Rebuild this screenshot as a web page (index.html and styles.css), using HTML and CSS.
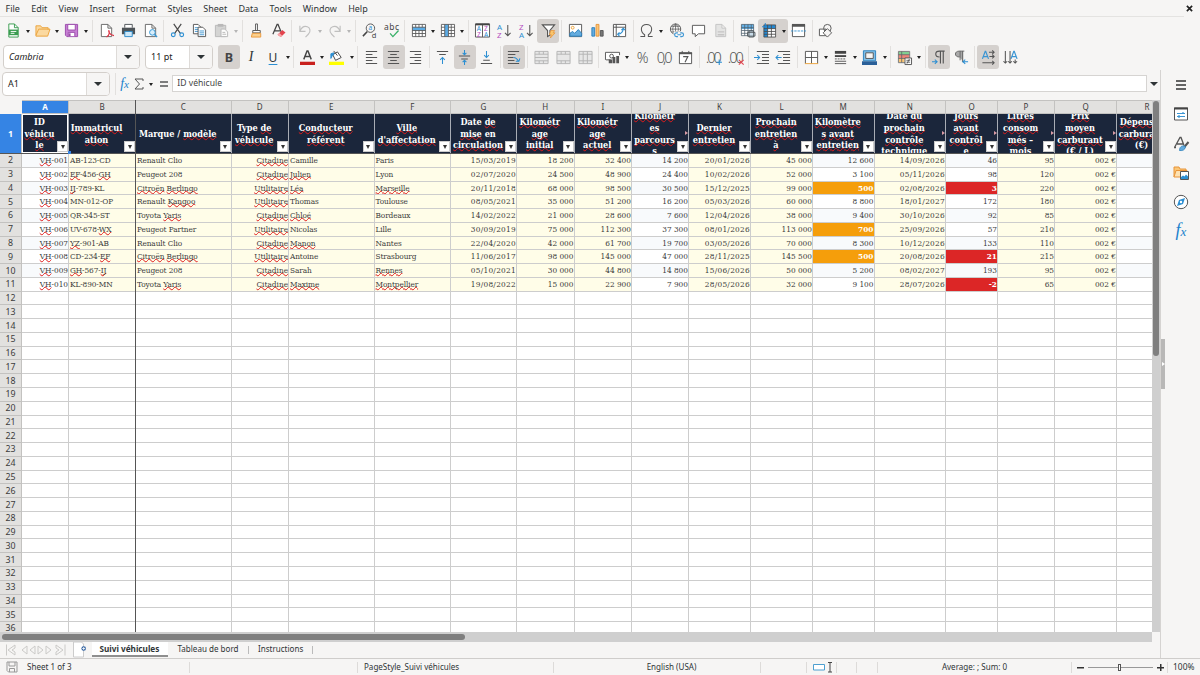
FILE: index.html
```
<!DOCTYPE html>
<html lang="fr">
<head>
<meta charset="UTF-8">
<meta name="viewport" content="width=device-width, initial-scale=1.0">
<title>Suivi véhicules</title>
<link rel="stylesheet" href="styles.css">
</head>
<body>
<div class="app">

  <nav class="menubar">
    <span>File</span><span>Edit</span><span>View</span><span>Insert</span><span>Format</span><span>Styles</span><span>Sheet</span><span>Data</span><span>Tools</span><span>Window</span><span>Help</span>
    <button class="close"><svg viewBox="0 0 8 8" width="7" height="7"><path d="M1 1l6 6M7 1L1 7" stroke="#222" stroke-width="1.9"/></svg></button>
  </nav>

  <div class="toolbar toolbar-main">
    <button class="btn"><svg viewBox="0 0 16 16"><path d="M3 1h6l4 4v10H3z" fill="#fff" stroke="#3a9c50"/><path d="M9 1v4h4" stroke="#3a9c50"/><path d="M3 7h10v6H3z" fill="#3a9c50"/><path d="M5 9h6M5 11h4" stroke="#fff"/></svg></button><i class="drop"></i>
    <button class="btn"><svg viewBox="0 0 16 16"><path d="M1 13V3h5l1.500 2H14v2M1 13L4 6.500h12L13.500 14H1z" fill="#fbd9a0" stroke="#eba33c"/></svg></button><i class="drop"></i>
    <button class="btn"><svg viewBox="0 0 16 16"><path d="M1.500 1.500h13v13H3l-1.500-1.500z" fill="#c77fd4" stroke="#9b4bab"/><path d="M4 1.500h8v6H4z" fill="#fff" stroke="#9b4bab"/><path d="M4.500 14v-4h7v4" fill="#fff" stroke="#9b4bab"/><path d="M6 11v3" stroke="#9b4bab" stroke-width="2"/></svg></button><i class="drop"></i>
    <i class="sep"></i>
    <button class="btn"><svg viewBox="0 0 16 16"><path d="M2.500 1.500h7l4 4v9h-11zM9.500 1.500v4h4" fill="#fff" stroke="#666"/><path d="M8 15c4-2 3-7 2.500-7s0 5 5.500 5.500" stroke="#dc3545" stroke-width="1.200"/></svg></button>
    <button class="btn"><svg viewBox="0 0 16 16"><path d="M4 5V1.500h8V5" fill="#fff" stroke="#4d5357"/><path d="M1 5h14v7H1z" fill="#4d5357"/><path d="M4 9h8v5.500H4z" fill="#cde7f8" stroke="#2d8bc9"/></svg></button>
    <button class="btn"><svg viewBox="0 0 16 16"><path d="M2.500 1.500h7l4 4v9h-11zM9.500 1.500v4h4" fill="#fff" stroke="#666"/><circle cx="10" cy="10" r="3" fill="#d9eefb" stroke="#3295d4"/><path d="M12.200 12.300L15 15" stroke="#3295d4" stroke-width="1.500"/></svg></button>
    <i class="sep"></i>
    <button class="btn"><svg viewBox="0 0 16 16"><path d="M4 1l7 10M12 1L5 11" stroke="#4b4b4b" stroke-width="1.300"/><circle cx="3.500" cy="12.500" r="2" stroke="#2d8fd2" stroke-width="1.200"/><circle cx="12.500" cy="12.500" r="2" stroke="#2d8fd2" stroke-width="1.200"/></svg></button>
    <button class="btn"><svg viewBox="0 0 16 16"><path d="M1.500 1.500h5l3 3v7h-8z" fill="#fff" stroke="#555"/><path d="M3 5h4M3 7h4M3 9h4" stroke="#4598d0"/><path d="M6.500 4.500h5l3 3v7h-8z" fill="#fff" stroke="#555"/><path d="M8 8.500h5M8 10.500h5M8 12.500h5" stroke="#4598d0"/></svg></button>
    <button class="btn dim"><svg viewBox="0 0 16 16"><path d="M1.500 2.500h11v12h-11z" fill="#ccc" stroke="#aaa"/><path d="M4 1h6v3H4z" fill="#aaa"/><path d="M7.500 6.500h4l3 3v5h-7z" fill="#fff" stroke="#aaa"/><path d="M9 10h3M9 12h4" stroke="#aaa"/></svg></button><i class="drop dim"></i>
    <i class="sep"></i>
    <button class="btn"><svg viewBox="0 0 16 16"><path d="M7 1h2v7H7z" fill="#fff" stroke="#555"/><path d="M4 8h8v2.500H4z" fill="#fff" stroke="#555"/><path d="M3.500 11h9v4h-10z" fill="#fbd08e" stroke="#e9973a"/></svg></button>
    <button class="btn"><svg viewBox="0 0 16 16"><path d="M2 12L6.500 1.500h1L11 10M3.500 8.500h6" stroke="#444" stroke-width="1.300"/><path d="M7 12.500l5-5 3.500 2.500-5 5z" fill="#e3444e"/><path d="M7 12.500l1.800-1.800 3 2.500-1.500 1.800z" fill="#f8a6aa"/></svg></button>
    <i class="sep"></i>
    <button class="btn dim"><svg viewBox="0 0 16 16"><path d="M2 3v6h6M2 9c2-5 5-6 8-5s4 5 1 8l-3 3" stroke="#b3b3b3" stroke-width="1.200"/></svg></button><i class="drop dim"></i>
    <button class="btn dim"><svg viewBox="0 0 16 16"><path d="M14 3v6H8M14 9c-2-5-5-6-8-5S2 9 5 12l3 3" stroke="#b3b3b3" stroke-width="1.200"/></svg></button><i class="drop dim"></i>
    <i class="sep"></i>
    <button class="btn"><svg viewBox="0 0 16 16"><circle cx="9" cy="5.500" r="4.500" stroke="#555"/><path d="M5.700 9L1 14" stroke="#444" stroke-width="1.600"/><text x="6.800" y="7.800" class="t-blue" font-size="7">a</text><text x="10.300" y="15.500" class="t-dark" font-size="8">d</text></svg></button>
    <button class="btn"><svg viewBox="0 0 16 16"><text x="0" y="7.500" class="t-dark" font-size="9" textLength="16">abc</text><path d="M6.500 11l3 3.500L15.500 8" stroke="#39b068" stroke-width="1.400"/></svg></button>
    <i class="sep"></i>
    <button class="btn"><svg viewBox="0 0 16 16"><path d="M1.500 1.500h14v13h-14z" fill="#fff"/><path d="M1.500 4.500h14V8h-14z" fill="#5cabe4"/><path d="M1.500 1.500h14v13h-14zM1.500 4.500h14M1.500 8h14M1.500 11.200h14M5 1.500v3M8.500 1.500v3M12 1.500v3M5 8v6.500M8.500 8v6.500M12 8v6.500" stroke="#555" stroke-width=".9"/></svg></button><i class="drop"></i>
    <button class="btn"><svg viewBox="0 0 16 16"><path d="M1.500 1.500h14v13h-14z" fill="#fff"/><path d="M5 1.500h4v13H5z" fill="#5cabe4"/><path d="M1.500 1.500h14v13h-14zM1.500 4.500H5M9 4.500h6.500M1.500 8H5M9 8h6.500M1.500 11.200H5M9 11.200h6.500M5 1.500v13M9 1.500v13M12 1.500v13" stroke="#555" stroke-width=".9"/></svg></button><i class="drop"></i>
    <i class="sep"></i>
    <button class="btn"><svg viewBox="0 0 16 16"><path d="M.5 1h15v14H.5zM8 1v14" fill="#fff" stroke="#555"/><path d="M.5 1.500h15" stroke="#444" stroke-width="2"/><text x="1.800" y="8.500" class="t-blue" font-size="7">A</text><text x="2" y="14.500" class="t-purple" font-size="7">Z</text><text x="9.700" y="8.500" class="t-purple" font-size="7">Z</text><text x="9.500" y="14.500" class="t-blue" font-size="7">A</text></svg></button>
    <button class="btn"><svg viewBox="0 0 16 16"><text x="0" y="7" class="t-blue" font-size="8.500">A</text><text x="0" y="15.500" class="t-purple" font-size="8.500">Z</text><path d="M11.500 2v11.500M8.500 10.500l3 3 3-3" stroke="#555" stroke-width="1.100"/></svg></button>
    <button class="btn"><svg viewBox="0 0 16 16"><text x="0" y="7" class="t-purple" font-size="8.500">Z</text><text x="0" y="15.500" class="t-blue" font-size="8.500">A</text><path d="M11.500 2v11.500M8.500 10.500l3 3 3-3" stroke="#555" stroke-width="1.100"/></svg></button>
    <button class="btn on"><svg viewBox="0 0 16 16"><path d="M1.500 2h13l-5 6v5L7 14.500V8z" fill="#fff" stroke="#555" stroke-width="1.200"/><path d="M10.500 8h4l-1.500 2.500H15L10 16l1-3.500H9z" fill="#f9c66d" stroke="#e8943a" stroke-width=".8"/></svg></button>
    <i class="sep"></i>
    <button class="btn"><svg viewBox="0 0 16 16"><path d="M1.500 1.500h13v13h-13z" fill="#fff" stroke="#555"/><circle cx="5" cy="5" r="1.500" stroke="#eba33c"/><path d="M2 14v-3l3-2 2 2 4-4 3.500 4v3z" fill="#64acdf" stroke="#2b80bd"/></svg></button>
    <button class="btn"><svg viewBox="0 0 16 16"><path d="M2 5h3v9H2z" fill="#64acdf" stroke="#2b80bd"/><path d="M6.500 1.500h3V14h-3z" fill="#fbc675" stroke="#e8943a"/><path d="M11 8h3v6h-3z" fill="#777" stroke="#555"/></svg></button>
    <button class="btn"><svg viewBox="0 0 16 16"><path d="M1.500 1.500h13v13h-13zM4.500 1.500v13M1.500 4.500h13" fill="#fff" stroke="#555"/><path d="M12 5.500c0 4-2 6-6 6.500M10 7.500l2-2 2 2M8 10l-2 2 2 2" stroke="#2d8fd2" stroke-width="1.100"/></svg></button>
    <i class="sep"></i>
    <button class="btn"><svg viewBox="0 0 16 16"><path d="M1.500 14.500h4.500v-2C3.500 11 2.500 9 2.500 6.500 2.500 3.500 5 1.500 8 1.500s5.500 2 5.500 5c0 2.500-1 4.500-3.500 6v2h4.500" stroke="#555" stroke-width="1.100"/></svg></button><i class="drop"></i>
    <button class="btn"><svg viewBox="0 0 16 16"><circle cx="7" cy="6.500" r="5.500" fill="#fff" stroke="#555"/><path d="M1.500 6.500h11M7 1v11M2.500 3.500h9M2.500 9.500h9M7 1C3 4 3 9 7 12M7 1c4 3 4 8 0 11" stroke="#555" stroke-width=".8"/><path d="M5 9h11v6.500H5z" fill="#f6f5f4"/><path d="M9.500 10.500H8a2 2 0 000 4h1.500M12 10.500h1.500a2 2 0 010 4H12M9 12.500h4" stroke="#3b95d3" stroke-width="1.200"/></svg></button>
    <button class="btn"><svg viewBox="0 0 16 16"><path d="M1.500 2.500h13v9H8l-3.500 3v-3h-3z" fill="#fff" stroke="#555"/></svg></button>
    <button class="btn dim"><svg viewBox="0 0 16 16"><path d="M3 1.500h6.500l4 4v9H3zM9.500 1.500v4h4" fill="#e0e0e0" stroke="#b9b9b9"/><path d="M5 12.500h7M5 9.500h7" stroke="#b9b9b9" stroke-width="1.500"/></svg></button>
    <i class="sep"></i>
    <button class="btn"><svg viewBox="0 0 16 16"><path d="M1.500 1.500h13v12h-13z" fill="#fff"/><path d="M1.500 1.500h13v5h-13z" fill="#64b0e6"/><path d="M1.500 1.500h13v12h-13zM5 1.500v12M8.500 1.500v12M12 1.500v12M1.500 5h13M1.500 8h13M1.500 11h13" stroke="#4b5c69" stroke-width=".8"/><path d="M8 10h8v4H8zM9.500 8.500h5V15h-5z" fill="#c8dbe8" stroke="#4d5357" stroke-width=".9"/></svg></button>
    <span class="on pair"><button class="btn"><svg viewBox="0 0 16 16"><path d="M2 2h12.500v13H2z" fill="#fff"/><path d="M2 2h12.500v4H6v9H2z" fill="#2388d2"/><path d="M2 2h12.500v13H2zM6 2v13M10 2v13M2 6h12.500M2 9h12.500M2 12h12.500" stroke="#4b4b4b" stroke-width=".9"/><path d="M0 4h5M3.500 0v5" stroke="#2388d2"/></svg></button><i class="drop"></i></span>
    <button class="btn"><svg viewBox="0 0 16 16"><path d="M1.500 2v12.500h13V2" fill="#fff" stroke="#555"/><path d="M1 1h14v3H1z" fill="#555"/><path d="M0 8.500h16" stroke="#3b95d3" stroke-dasharray="2.500 1"/></svg></button>
    <i class="sep"></i>
    <button class="btn"><svg viewBox="0 0 16 16"><path d="M1.500 6.500h7v7h-7z" fill="#fff" stroke="#555"/><circle cx="10" cy="5.500" r="4" stroke="#555"/><path d="M10 6l4.500 4.500L10 15l-4.500-4.500z" fill="#f6f5f4" stroke="#555"/></svg></button>
  </div>

  <div class="toolbar toolbar-format">
    <div class="combo font-name"><span>Cambria</span><b></b></div>
    <div class="combo font-size"><span>11 pt</span><b></b></div>
    <button class="btn on bold">B</button>
    <button class="btn ital">I</button>
    <button class="btn under"><u>U</u></button><i class="drop"></i>
    <i class="sep"></i>
    <button class="btn"><svg viewBox="0 0 16 16"><path d="M4 10L7.500 1h1L12 10M5.200 7h5.600" stroke="#444" stroke-width="1.500"/><path d="M0 12.500h16V16H0z" fill="#c9211e"/></svg></button><i class="drop"></i>
    <button class="btn"><svg viewBox="0 0 16 16"><path d="M4 5l5-3 4 6-6 3z" fill="#fff" stroke="#444"/><path d="M5 1l4 5" stroke="#444"/><path d="M2 9V4l3-1v2L3.500 6z" fill="#2d8fd2" stroke="#2d8fd2"/><path d="M0 12.500h16V16H0z" fill="#ff0"/></svg></button><i class="drop"></i>
    <i class="sep"></i>
    <button class="btn"><svg viewBox="0 0 16 16"><path d="M2 1.500h12M2 4.700h7M2 8h12M2 11.200h7M2 14.500h12" stroke="#555" stroke-width="1.100"/></svg></button>
    <button class="btn on"><svg viewBox="0 0 16 16"><path d="M2 1.500h12M4.500 4.700h7M2 8h12M4.500 11.200h7M2 14.500h12" stroke="#555" stroke-width="1.100"/></svg></button>
    <button class="btn"><svg viewBox="0 0 16 16"><path d="M2 1.500h12M7 4.700h7M2 8h12M7 11.200h7M2 14.500h12" stroke="#555" stroke-width="1.100"/></svg></button>
    <i class="sep"></i>
    <button class="btn"><svg viewBox="0 0 16 16"><path d="M2 1.500h12M4.500 4.700h7" stroke="#555" stroke-width="1.100"/><path d="M8 15V8M5.500 10.500L8 8l2.500 2.500" stroke="#2d8fd2" stroke-width="1.100"/></svg></button>
    <button class="btn on"><svg viewBox="0 0 16 16"><path d="M2 6.500h12M4.500 9.500h7" stroke="#555" stroke-width="1.100"/><path d="M8 0v5M6 3l2 2 2-2M8 16v-5M6 13l2-2 2 2" stroke="#2d8fd2" stroke-width="1.100"/></svg></button>
    <button class="btn"><svg viewBox="0 0 16 16"><path d="M4.500 11h7M2 14.300h12" stroke="#555" stroke-width="1.100"/><path d="M8 1v7M5.500 5.500L8 8l2.500-2.500" stroke="#2d8fd2" stroke-width="1.100"/></svg></button>
    <i class="sep"></i>
    <button class="btn on"><svg viewBox="0 0 16 16"><path d="M2 1.500h12M2 4.700h8M2 8h6M2 11.200h7M2 14.500h12" stroke="#555" stroke-width="1.100"/><path d="M8 8c3 0 4 1 5.500 4.500M10.500 12h3.300l1-3" stroke="#2d8fd2" stroke-width="1.100"/></svg></button>
    <i class="sep"></i>
    <button class="btn"><svg viewBox="0 0 16 16"><path d="M1 1.500h14v13H1zM1 4.500h14M1 11.500h14M5.500 1.500v3M10 1.500v3M5.500 11.500v3M10 11.500v3M1 8h14" fill="#e7e7e7" stroke="#b4b4b4"/></svg></button>
    <button class="btn"><svg viewBox="0 0 16 16"><path d="M1 1.500h14v13H1zM1 4.500h14M1 11.500h14M5.500 1.500v3M10 1.500v3M5.500 11.500v3M10 11.500v3" fill="#e7e7e7" stroke="#b4b4b4"/></svg></button>
    <button class="btn"><svg viewBox="0 0 16 16"><path d="M1 1.500h14v13H1zM1 4.500h14M1 11.500h14M5.500 1.500v13M10 1.500v13" fill="#e7e7e7" stroke="#b4b4b4"/></svg></button>
    <i class="sep"></i>
    <button class="btn"><svg viewBox="0 0 16 16"><path d="M.5 10.500v-8h15v3" fill="#fff" stroke="#555"/><circle cx="7" cy="6.500" r="2" stroke="#555"/><path d="M1 10.500h5" stroke="#555"/><path d="M4 10h3.500v4H4zM8 7.500h3V14H8zM12 6.500h3V14h-3z" fill="#555"/></svg></button><i class="drop"></i>
    <button class="btn num">%</button>
    <button class="btn num">0,0</button>
    <button class="btn"><svg viewBox="0 0 16 16"><path d="M1.500 3h13v11.500h-13z" fill="#fff" stroke="#555"/><path d="M1 3.500h14" stroke="#555" stroke-width="2"/><path d="M4.500 1v3M11.500 1v3" stroke="#555"/><path d="M5.500 7h5l-3 6" stroke="#555" stroke-width="1.200"/></svg></button>
    <i class="sep"></i>
    <button class="btn num">.00<svg class="corner" viewBox="0 0 6 6"><path d="M3 .5v5M.5 3h5" stroke="#2d8fd2"/></svg></button>
    <button class="btn num">.00<svg class="corner" viewBox="0 0 6 6"><path d="M.8.8l4.400 4.400M5.200.8L.8 5.200" stroke="#e3444e"/></svg></button>
    <i class="sep"></i>
    <button class="btn"><svg viewBox="0 0 16 16"><path d="M3 1.500h13M8.500 4.700H16M8.500 8H16M8.500 11.200H16M3 14.500h13" stroke="#555" stroke-width="1.100"/><path d="M0 8h6M3.500 5.500L6 8l-2.500 2.500" stroke="#2d8fd2" stroke-width="1.100"/></svg></button>
    <button class="btn"><svg viewBox="0 0 16 16"><path d="M2 1.500h13M7.500 4.700H15M7.500 8H15M7.500 11.200H15M2 14.500h13" stroke="#555" stroke-width="1.100"/><path d="M6 8H0M2.500 5.500L0 8l2.500 2.500" stroke="#2d8fd2" stroke-width="1.100"/></svg></button>
    <i class="sep"></i>
    <button class="btn"><svg viewBox="0 0 16 16"><path d="M1.500 14.500v-13h13v13M8 1.500v13M1.500 8h13" fill="#fff" stroke="#555"/><path d="M1 14.500h14" stroke="#eba33c"/></svg></button><i class="drop"></i>
    <button class="btn"><svg viewBox="0 0 16 16"><path d="M2 2.500h12" stroke="#444" stroke-width="3"/><path d="M2 6.500h12" stroke="#444" stroke-width="2"/><path d="M2 9.500h12" stroke="#555" stroke-dasharray="2 1"/><path d="M2 12h12M2 14.500h12" stroke="#555"/></svg></button><i class="drop"></i>
    <button class="btn"><svg viewBox="0 0 16 16"><path d="M1.500.8h13v10.700h-13z" fill="#7fbfe9" stroke="#2b80bd"/><path d="M4 3h8v6H4z" fill="#f6f5f4" stroke="#555"/><path d="M0 12h16v4H0z" fill="#2a6099"/></svg></button><i class="drop"></i>
    <i class="sep"></i>
    <button class="btn"><svg viewBox="0 0 16 16"><path d="M1.500 1.500h12v12h-12z" fill="#fff"/><path d="M2 2h11v3H2z" fill="#7fcf90"/><path d="M2 5h11v4H2z" fill="#ee8378"/><path d="M2 9h6v4H2z" fill="#fbc675"/><path d="M1.500 1.500h12v12h-12zM5 1.500v12M1.500 5h12M1.500 9h12" stroke="#666" stroke-width=".9"/><path d="M8.500 8.500h7v7h-7z" fill="#fff" stroke="#555"/><path d="M10 11h4M10 13h4M13.300 9.500L10.700 14.500" stroke="#444" stroke-width=".8"/></svg></button><i class="drop"></i>
    <i class="sep"></i>
    <button class="btn on"><svg viewBox="0 0 16 16"><path d="M8 7.500C5 7.500 4 6 4 4.300S5.500 1.200 8 1.200h5.500M9 1v13.500M12 1v13.500" stroke="#555" stroke-width="1.200"/><path d="M0 12.500h5M3 10.200l2.500 2.300L3 14.800" stroke="#2d8fd2" stroke-width="1.100"/></svg></button>
    <button class="btn"><svg viewBox="0 0 16 16"><path d="M6 7.500C3 7.500 1.500 6 1.500 4.300S3 1.200 5.500 1.200H10V12L7 9z" fill="#aaa"/><path d="M6 7.500C3 7.500 1.500 6 1.500 4.300S3 1.200 5.500 1.200H11M6.500 1v10M9 1v12" stroke="#666"/><path d="M15 12.500h-5M12 10.200l-2.500 2.300 2.500 2.300" stroke="#2d8fd2" stroke-width="1.100"/></svg></button>
    <i class="sep"></i>
    <button class="btn on"><svg viewBox="0 0 16 16"><path d="M1.500 9.500l3-8h.5l3 8M2.500 7h4.500" stroke="#3b95d3" stroke-width="1.300"/><path d="M8.500 2.500H14M9 7h5M1.500 13.500H14M12 .5l2 2-2 2M12 5l2 2-2 2M12 11.500l2 2-2 2" stroke="#555" stroke-width="1.100"/></svg></button>
    <button class="btn"><svg viewBox="0 0 16 16"><path d="M8.500 9.500l3-8h.5l3 8M9.500 7h4.500" stroke="#3b95d3" stroke-width="1.300"/><path d="M2.500 1v13M7.500 1v13M13 10v4M.5 12l2 2 2-2M5.500 12l2 2 2-2M11 12l2 2 2-2" stroke="#555" stroke-width="1.100"/></svg></button>
  </div>

  <div class="main">
    <div class="work">
      <div class="formula">
        <div class="combo name-box"><span>A1</span><b></b></div>
        <i class="sep"></i>
        <em class="fx">f<small>x</small></em>
        <svg class="sigma" viewBox="0 0 10 12"><path d="M9 3V1H1l4.500 5L1 11h8V9" stroke="#555"/></svg>
        <i class="drop"></i>
        <svg class="equals" viewBox="0 0 10 8"><path d="M1 2h8M1 6h8" stroke="#555" stroke-width="1.500"/></svg>
        <div class="input">ID véhicule</div>
        <i class="caret"></i>
      </div>

      <div class="sheet-area">
        <div class="sheet" id="sheet"></div>
        <div class="vscroll"><div class="thumb"></div></div>
      </div>
      <div class="hscroll"><div class="thumb"></div></div>

      <div class="tabs">
        <svg class="tab-nav" viewBox="0 0 62 14"><path d="M1.500 1.500v11M10 2L3 7l7 5V9L7 7l3-2zM22 3l-5 4 5 4zM30 3l-5 4 5 4zM33 3l5 4-5 4zM41 3l5 4-5 4zM51 2l7 5-7 5V9l3-2-3-2zM60 1.500v11" stroke="#cbcac8"/></svg>
        <svg class="tab-add" viewBox="0 0 14 15"><path d="M.5 0h8l2 2v13H.5z" fill="#fff" stroke="#ccc"/><circle cx="10.700" cy="6.500" r="2.300" fill="#3465a4"/><path d="M9.200 6.500h3M10.700 5v3" stroke="#fff" stroke-width=".8"/></svg>
        <span class="tab current">Suivi véhicules</span>
        <span class="tab">Tableau de bord</span>
        <span class="tab">Instructions</span>
      </div>
    </div>

    <aside class="sidebar">
      <div class="grip"></div>
      <svg viewBox="0 0 16 16"><path d="M3 4h10M3 8h10M3 12h10" stroke="#333" stroke-width="1.600"/></svg>
      <svg viewBox="0 0 16 16"><path d="M1.500 2h13v12h-13z" fill="#fff" stroke="#555"/><path d="M1 2.500h14" stroke="#444" stroke-width="2"/><path d="M4 7.500h8M10 6v1.500M4 10.500h8M6 9v3" stroke="#3b95d3" stroke-width="1.200"/></svg>
      <svg viewBox="0 0 16 16"><path d="M1.500 11.500L7 1.500h1l3 8M4 8h6M1 11.500h2" stroke="#555" stroke-width="1.300"/><path d="M15.500 6l-5 6" stroke="#555" stroke-width="2"/><path d="M11.500 10c-3-.5-5 1-5 4.500 3.500.5 5.500-1 6-3.500z" fill="#64acdf" stroke="#2b80bd" stroke-width=".8"/></svg>
      <svg viewBox="0 0 16 16"><path d="M1 12V2h5l1 2h6v2" fill="#fbc675" stroke="#e8943a"/><path d="M1 12l2-6.500h11V12z" fill="#fde2b3" stroke="#e8943a"/><path d="M7.500 6.500h8v8h-8z" fill="#fff" stroke="#555"/><path d="M8 14v-2l2-1.500 1.500 1L13 9.500l2 2V14z" fill="#2d8fd2"/></svg>
      <svg viewBox="0 0 16 16"><circle cx="8" cy="8" r="6.700" fill="#fff" stroke="#555"/><path d="M12 4l-2 6-6 2 2-6z" fill="#2d8fd2"/><circle cx="8" cy="8" r="1.200" fill="#fff"/></svg>
      <em class="fx big">f<small>x</small></em>
    </aside>
  </div>

  <footer class="status">
    <div><svg viewBox="0 0 12 12"><path d="M1 1h10v10H2.500L1 9.500zM3 1v4h6V1M3.500 11V7.500h5V11" stroke="#999"/></svg><span class="pages">Sheet 1 of 3</span></div>
    <div></div>
    <div class="style-name">PageStyle_Suivi véhicules</div>
    <div class="mid">English (USA)</div>
    <div></div>
    <div class="ins"><svg class="wide" viewBox="0 0 19 12"><path d="M.5 3.500h11v5.500H.5z" fill="#fff" stroke="#4d9fd0"/><path d="M15 1.500h4M15 11h4M17 1.500V11" stroke="#444"/></svg></div>
    <div></div>
    <div></div>
    <div class="mid">Average: ; Sum: 0</div>
    <div class="zoom"><i></i><span class="track"><s></s></span><i class="plus"></i></div>
    <div class="mid pct">100%</div>
  </footer>
</div>
<script src="script.js"></script>
</body>
</html>
```
FILE: styles.css
```
* {
    box-sizing: border-box;
}
body {
    margin: 0;
    background: #f6f5f4;
    color: #2e3436;
    font-family: "Noto Sans", sans-serif;
    font-size: 9px;
}
svg {
    display: block;
    fill: none;
    overflow: visible;
}
button {
    border: none;
    background: none;
    padding: 0;
    color: inherit;
    font: inherit;
}
.app {
    width: 1200px;
    height: 675px;
    overflow: hidden;
    display: flex;
    flex-direction: column;
}

/* menu */
.menubar {
    display: flex;
    align-items: center;
    gap: 11.250px;
    height: 17px;
    padding: 0 7px 0 5.5px;
    flex: none;
    background: linear-gradient(#e4e3e1, #e4e3e1) 0 100% / 1184px 1px no-repeat;
}
.close {
    margin-left: auto;
}

/* toolbars */
.toolbar {
    display: flex;
    align-items: center;
    flex: none;
}
.toolbar-main {
    height: 27px;
    padding-left: 2px;
}
.toolbar-format {
    height: 26px;
    padding-left: 3px;
}
.btn {
    width: 22px;
    height: 24px;
    flex: none;
    display: flex;
    align-items: center;
    justify-content: center;
    border-radius: 3px;
    position: relative;
}
.btn svg {
    width: 15px;
    height: 15px;
}
.on {
    background: #d5d1ce;
}
.pair {
    display: flex;
    align-items: center;
    border-radius: 3px;
}
.drop {
    width: 7.4px;
    flex: none;
    display: flex;
    justify-content: center;
}
.drop::before {
    content: "";
    border: 2.5px solid transparent;
    border-top: 3px solid #222;
    border-bottom: 0;
    margin-top: 1px;
}
.drop.dim::before {
    border-top-color: #b5b5b5;
}
.btn.dim {
    opacity: .8;
}
.sep {
    width: 5.18px;
    height: 22px;
    flex: none;
    background: linear-gradient(#e2e0de, #e2e0de) 50% 0 / 1px 100% no-repeat;
}
.t-blue {
    fill: #2d8fd2;
}
.t-purple {
    fill: #b54fc0;
}
.t-dark {
    fill: #444;
}
.bold {
    font-size: 12.500px;
    font-weight: 700;
    color: #444;
}
.ital {
    font: italic 14px "Liberation Serif", serif;
}
.under {
    font-size: 12px;
}
.under u {
    text-decoration-color: #2d8fd2;
    text-underline-offset: 2px;
}
.num {
    font-size: 14.500px;
    font-weight: 300;
    letter-spacing: -2px;
    color: #555;
}
.btn .corner {
    position: absolute;
    right: 1px;
    bottom: 4px;
    width: 6.500px;
    height: 6.500px;
}
.combo {
    display: flex;
    height: 24px;
    flex: none;
    background: #fff;
    border: 1px solid #d3cfcb;
    border-radius: 4px;
    overflow: hidden;
    line-height: 22px;
    color: #222;
}
.combo span {
    flex: 1;
    padding-left: 5px;
}
.combo b {
    width: 23px;
    background: #f6f5f4;
    border-left: 1px solid #dedbd8;
    display: flex;
    align-items: center;
    justify-content: center;
}
.combo b::before,
.caret {
    content: "";
    border: 4px solid transparent;
    border-top: 4.5px solid #2e3436;
    border-bottom: 0;
}
.font-name {
    width: 137px;
    margin-right: 5px;
    font-style: italic;
}
.font-size {
    width: 68px;
    margin-right: 5px;
}

/* formula bar */
.main {
    display: flex;
    height: 588px;
    flex: none;
}
.work {
    width: 1161px;
    display: flex;
    flex-direction: column;
    border-right: 1px solid #d5d3d1;
}
.formula {
    display: flex;
    align-items: center;
    height: 30px;
    padding: 1px 2px 4px 2px;
    flex: none;
}
.name-box {
    width: 108px;
    margin-right: 3px;
}
.fx {
    font: italic 14px/14px "Liberation Serif", serif;
    color: #2181cc;
    margin: 0 5px 0 2px;
}
.fx small {
    font-size: 11px;
}
.sigma {
    width: 10px;
    height: 12px;
    margin-right: 3px;
}
.equals {
    width: 10px;
    height: 8px;
    margin: 0 3px 0 5px;
}
.input {
    flex: 1;
    height: 17px;
    line-height: 15px;
    padding-left: 4px;
    background: #fff;
    border: 1px solid #d6d4d2;
    color: #444;
    font-size: 8.600px;
}
.caret {
    margin-left: 3px;
}

/* grid */
.sheet-area {
    display: flex;
    height: 532px;
    flex: none;
}
.sheet {
    width: 1152px;
    height: 532px;
    overflow: hidden;
    position: relative;
    background: #fff;
}
.row {
    display: grid;
    grid-template-columns: 22px 47px 67px 95.500px 57.500px 85.500px 76.500px 66px 57.500px 57.500px 57px 62px 62px 61.500px 71.500px 52px 57px 62px 61px;
    height: 13.780px;
    width: 1200px;
}
.row.letters {
    height: 14px;
    border-top: 1px solid #c3c2c0;
}
.row.titles {
    height: 40px;
}
.corner-cell {
    background: #f6f5f4;
    margin-top: -1px;
}
.head {
    background: #e2e1df;
    border-right: 1px solid #c3c2c0;
    border-bottom: 1px solid #c3c2c0;
    display: flex;
    align-items: center;
    justify-content: center;
    font-size: 8.800px;
    color: #3c3c3c;
    min-width: 0;
}
.letters .head {
    font-size: 8px;
    line-height: 12px;
}
.head.sel {
    background: #3584e4;
    color: #fff;
    font-weight: 700;
}
.cell {
    border-right: 1px solid #cdcdcd;
    border-bottom: 1px solid #cdcdcd;
    overflow: hidden;
    white-space: nowrap;
    font: 8.200px/13px "DejaVu Serif Condensed", "DejaVu Serif", serif;
    letter-spacing: -.1px;
    color: #3b3b3b;
    padding-left: 1px;
    min-width: 0;
}
.cell.right {
    text-align: right;
    letter-spacing: 0;
}
.cell.date {
    letter-spacing: .28px;
}
.cell.entry {
    background: #fffde8;
}
.cell.calc {
    background: #fff;
}
.even .calc {
    background: #f8fafc;
}
.cell.warn {
    background: #f59e0b;
    color: #fff;
    font-weight: 700;
}
.cell.alert {
    background: #dc2626;
    color: #fff;
    font-weight: 700;
}
.err {
    text-decoration: underline wavy #e01b1b .7px;
    text-decoration-skip-ink: none;
    text-underline-offset: -.8px;
}
.title {
    background: #1b263b;
    color: #fff;
    border-right: 1px solid #a9adb5;
    border-bottom: 1px solid #777;
    position: relative;
    overflow: hidden;
    display: flex;
    align-items: center;
    padding-right: 11px;
    min-width: 0;
    font: 700 9.100px/11.800px "DejaVu Serif Condensed", "DejaVu Serif", serif;
    text-align: center;
}
.title p {
    flex: 1;
    margin: 0;
    min-width: 0;
    white-space: nowrap;
    display: flex;
    flex-direction: column;
    align-items: center;
}
.title.first {
    box-shadow: inset 0 0 0 1px #fff;
}
.filter {
    position: absolute;
    right: 0;
    bottom: 1px;
    width: 11px;
    height: 11px;
    background: #fff;
    border: 1px solid #ccc;
    display: flex;
    align-items: center;
    justify-content: center;
}
.filter::before {
    content: "";
    border: 2.500px solid transparent;
    border-top: 4px solid #333;
    border-bottom: 0;
}
.more {
    position: absolute;
    right: 0;
    top: 17px;
    border: 2px solid transparent;
    border-left: 3px solid #d99ba5;
    border-right: 0;
}
.freeze-v {
    position: absolute;
    left: 135px;
    top: 0;
    width: 1px;
    height: 100%;
    background: #555;
}
.freeze-h {
    position: absolute;
    left: 0;
    top: 53px;
    width: 100%;
    height: 1px;
    background: #555;
}
.handle {
    position: absolute;
    left: 68px;
    top: 51px;
    width: 3px;
    height: 3px;
    background: #3584e4;
}
.vscroll {
    flex: 1;
    background: #cfcfcf;
    padding: 1px 1px 0;
}
.vscroll .thumb {
    height: 255px;
    background: #7f7f7f;
    border-radius: 3px;
}
.hscroll {
    height: 10px;
    width: 1152px;
    flex: none;
    background: #cfcfcf;
    padding: 2px;
}
.hscroll .thumb {
    width: 463px;
    height: 6px;
    background: #7f7f7f;
    border-radius: 3px;
}

/* tabs */
.tabs {
    height: 16px;
    flex: none;
    display: flex;
    align-items: flex-start;
}
.tab-nav {
    width: 62px;
    height: 14px;
    margin: 1px 6px 0 5px;
}
.tab-add {
    width: 14px;
    height: 15px;
    margin-right: 5px;
}
.tab {
    line-height: 14px;
    padding: 0 10px 0 9.500px;
    height: 15px;
    font-size: 8.050px;
    position: relative;
}
.tab + .tab {
    background: linear-gradient(#bbb, #bbb) 100% 4px / 1px 8px no-repeat;
}
.tab.current {
    font-weight: 700;
    font-size: 8.200px;
    background: #fff;
    border-bottom: 2px solid #8f8f8f;
    width: 76px;
    padding: 0 0 0 7.500px;
    white-space: nowrap;
}

/* sidebar */
.sidebar {
    width: 39px;
    display: flex;
    flex-direction: column;
    align-items: center;
    gap: 13.300px;
    padding: 7px 0 0 1px;
    position: relative;
}
.sidebar svg {
    width: 16px;
    height: 16px;
}
.fx.big {
    font-size: 18px;
    margin: 0;
}
.fx.big small {
    font-size: 13px;
}
.grip {
    position: absolute;
    left: 0;
    top: 269px;
    width: 4px;
    height: 50px;
    background: #b9b8b7;
}
.grip::before {
    content: "";
    position: absolute;
    left: 1px;
    top: 23px;
    border: 2px solid transparent;
    border-left: 3px solid #fff;
    border-right: 0;
}

/* status bar */
.status {
    flex: 1;
    border-top: 1px solid #cfcdcb;
    display: grid;
    grid-template-columns: 190px 168px 196px 207px 46px 30px 20px 20.500px 194px 96px 32.500px;
    line-height: 16px;
    font-size: 8.050px;
}
.status div {
    display: flex;
    align-items: center;
    background: linear-gradient(#dddbd9, #dddbd9) 100% 3px / 1px 11px no-repeat;
    white-space: nowrap;
}
.status svg {
    width: 12px;
    height: 12px;
    margin-left: 6px;
}
.status .wide {
    width: 19px;
}
.pages {
    margin-left: 9px;
}
.status .style-name {
    padding-left: 6px;
}
.status .mid {
    justify-content: center;
}
.status div:nth-child(4) {
    padding-left: 28px;
}
.status .pct {
    background: none;
    font-size: 8.400px;
}
.status .zoom {
    gap: 4px;
    padding-left: 5px;
}
.zoom i {
    width: 7px;
    height: 7px;
    background: linear-gradient(#333, #333) 0 3px / 7px 1.500px no-repeat;
}
.zoom .plus {
    background: linear-gradient(#333, #333) 0 3px / 7px 1.500px no-repeat, linear-gradient(#333, #333) 3px 0 / 1.500px 7px no-repeat;
}
.track {
    width: 65px;
    height: 1px;
    background: #999;
    position: relative;
}
.track s {
    position: absolute;
    left: 30px;
    top: -3px;
    width: 3px;
    height: 7px;
    border: 1px solid #555;
    background: #fff;
}
```
FILE: script.js
```
const sheet = document.getElementById('sheet');

// a leading ~ marks a word flagged by the spell checker
const titles = [
  'ID|~véhicu|~le', '~Immatricul|~ation', 'Marque / ~modèle', 'Type ~de|~véhicule', '~Conducteur|~référent',
  '~Ville|~d\'affectation', 'Date ~de|~mise en|~circulation', '~Kilométr|~age|~initial', '~Kilométr|~age|~actuel',
  '~Kilométr|~es|~parcours|~s', '~Dernier|~entretien', '~Prochain|~entretien|~à', '~Kilomètre|~s ~avant|~entretien',
  'Date ~du|~prochain|~contrôle|~technique', '~Jours|~avant|~contrôl|~e', '~Litres|~consom|~més –|~mois',
  '~Prix|~moyen|~carburant|(€ / L)', '~Dépenses|~carburant|(€)'
];

const rows = [
  ['~VH-001', 'AB-123-CD', 'Renault Clio', '~Citadine', 'Camille', 'Paris', '15/03/2019', '18 200', '32 400', '14 200', '20/01/2026', '45 000', '12 600', '14/09/2026', '46', '95'],
  ['~VH-002', '~EF-456-~GH', 'Peugeot 208', '~Citadine', '~Julien', 'Lyon', '02/07/2020', '24 500', '48 900', '24 400', '10/02/2026', '52 000', '3 100', '05/11/2026', '98', '120'],
  ['~VH-003', '~IJ-789-KL', '~Citroën ~Berlingo', '~Utilitaire', '~Léa', '~Marseille', '20/11/2018', '68 000', '98 500', '30 500', '15/12/2025', '99 000', '500', '02/08/2026', '3', '220'],
  ['~VH-004', 'MN-012-OP', 'Renault ~Kangoo', '~Utilitaire', 'Thomas', 'Toulouse', '08/05/2021', '35 000', '51 200', '16 200', '05/03/2026', '60 000', '8 800', '18/01/2027', '172', '180'],
  ['~VH-005', 'QR-345-ST', 'Toyota ~Yaris', '~Citadine', '~Chloé', 'Bordeaux', '14/02/2022', '21 000', '28 600', '7 600', '12/04/2026', '38 000', '9 400', '30/10/2026', '92', '85'],
  ['~VH-006', 'UV-678-~WX', 'Peugeot Partner', '~Utilitaire', 'Nicolas', 'Lille', '30/09/2019', '75 000', '112 300', '37 300', '08/01/2026', '113 000', '700', '25/09/2026', '57', '210'],
  ['~VH-007', '~YZ-901-AB', 'Renault Clio', '~Citadine', '~Manon', 'Nantes', '22/04/2020', '42 000', '61 700', '19 700', '03/05/2026', '70 000', '8 300', '10/12/2026', '133', '110'],
  ['~VH-008', 'CD-234-~EF', '~Citroën ~Berlingo', '~Utilitaire', 'Antoine', 'Strasbourg', '11/06/2017', '98 000', '145 000', '47 000', '28/11/2025', '145 500', '500', '20/08/2026', '21', '215'],
  ['~VH-009', '~GH-567-~IJ', 'Peugeot 208', '~Citadine', 'Sarah', '~Rennes', '05/10/2021', '30 000', '44 800', '14 800', '15/06/2026', '50 000', '5 200', '08/02/2027', '193', '95'],
  ['~VH-010', 'KL-890-MN', 'Toyota ~Yaris', '~Citadine', '~Maxime', '~Montpellier', '19/08/2022', '15 000', '22 900', '7 900', '28/05/2026', '32 000', '9 100', '28/07/2026', '-2', '65']
];

const leftCols = [1, 2, 4, 5];
const dateCols = [6, 10, 13];
const calcCols = [0, 9, 12, 14, 17];
const overflowing = [9, 13, 14, 15, 16];

const mark = text => text.replace(/~([^\s~-]+)/g, '<span class="err">$1</span>');

let html = '<div class="row letters"><div class="corner-cell"></div>';
for (let c = 0; c < 18; c++) {
  html += `<div class="head ${c === 0 ? 'sel' : ''}">${String.fromCharCode(65 + c)}</div>`;
}
html += '</div><div class="row titles"><div class="head sel">1</div>';
titles.forEach((t, c) => {
  const lines = t.split('|').map(line => `<span>${mark(line)}</span>`).join('');
  html += `<div class="title ${c === 0 ? 'first' : ''}"><p>${lines}</p>`;
  if (overflowing.includes(c)) html += '<i class="more"></i>';
  html += '<i class="filter"></i></div>';
});
html += '</div>';

for (let r = 2; r <= 36; r++) {
  const data = rows[r - 2];
  html += `<div class="row ${r % 2 ? '' : 'even'}"><div class="head">${r}</div>`;
  for (let c = 0; c < 18; c++) {
    let cls = 'cell';
    let text = '';
    if (data) {
      text = c === 16 ? '002 €' : data[c] || '';
      if (!leftCols.includes(c)) cls += ' right';
      if (dateCols.includes(c)) cls += ' date';
      if (c === 12 && ['500', '700'].includes(text)) cls += ' warn';
      else if (c === 14 && Number(text) < 30) cls += ' alert';
      else cls += calcCols.includes(c) ? ' calc' : ' entry';
    }
    html += `<div class="${cls}">${mark(text)}</div>`;
  }
  html += '</div>';
}
html += '<div class="freeze-v"></div><div class="freeze-h"></div><div class="handle"></div>';
sheet.innerHTML = html;
```
